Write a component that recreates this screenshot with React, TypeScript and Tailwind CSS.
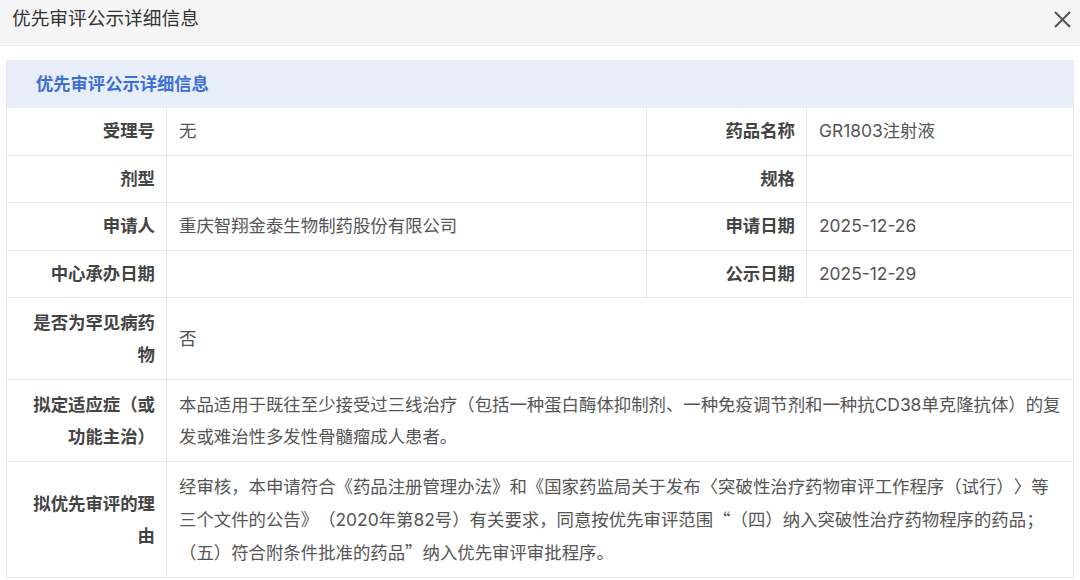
type Pair = { label: string; value: string };

const pairRows: [Pair, Pair][] = [
    [
        { label: '受理号', value: '无' },
        { label: '药品名称', value: 'GR1803注射液' },
    ],
    [
        { label: '剂型', value: '' },
        { label: '规格', value: '' },
    ],
    [
        { label: '申请人', value: '重庆智翔金泰生物制药股份有限公司' },
        { label: '申请日期', value: '2025-12-26' },
    ],
    [
        { label: '中心承办日期', value: '' },
        { label: '公示日期', value: '2025-12-29' },
    ],
];

const wideRows: { label: string; lines: string[] }[] = [
    { label: '是否为罕见病药物', lines: ['否'] },
    {
        label: '拟定适应症（或功能主治）',
        lines: [
            '本品适用于既往至少接受过三线治疗（包括一种蛋白酶体抑制剂、一种免疫调节剂和一种抗CD38单克隆抗体）的复',
            '发或难治性多发性骨髓瘤成人患者。',
        ],
    },
    {
        label: '拟优先审评的理由',
        lines: [
            '经审核，本申请符合《药品注册管理办法》和《国家药监局关于发布〈突破性治疗药物审评工作程序（试行）〉等',
            '三个文件的公告》（2020年第82号）有关要求，同意按优先审评范围“（四）纳入突破性治疗药物程序的药品；',
            '（五）符合附条件批准的药品”纳入优先审评审批程序。',
        ],
    },
];

const labelCell =
    'flex items-center justify-end border-r border-b border-[#e6e8eb] pl-[19px] pr-[11px] text-right font-bold text-[#444]';
const valueCell = 'flex items-center border-r border-b border-[#e6e8eb] px-[12px] text-[#555]';

// curly quotes are set full width, as in the source page
function Line({ text }: { text: string }) {
    const parts = text.split(/([“”])/);
    return (
        <div className="whitespace-nowrap">
            {parts.map((part, i) =>
                part === '“' || part === '”' ? (
                    <span key={i} className="font-['Noto_Sans_CJK_SC'] [font-feature-settings:'fwid']">
                        {part}
                    </span>
                ) : (
                    part
                ),
            )}
        </div>
    );
}

export default function App() {
    return (
        <div
            className="h-[580px] w-[1080px] overflow-hidden bg-white [text-spacing-trim:space-all]"
            style={{ fontFamily: 'Inter, "Noto Sans CJK SC", sans-serif' }}
        >
            <div className="flex h-[46px] items-start justify-between border-b border-[#ebebeb] bg-[#f5f5f5] pl-[12px] pr-[9px] pt-[5px]">
                <span className="text-[18.7px] leading-[28px] text-[#333]">优先审评公示详细信息</span>
                <svg width="17" height="17" viewBox="0 0 17 17" className="mt-[6px] text-[#555]">
                    <path d="M1 1 L16 16 M16 1 L1 16" stroke="currentColor" strokeWidth="2" fill="none" />
                </svg>
            </div>

            <div className="mx-[6px] mt-[14px] w-[1068px] border-l border-[#e6e8eb]">
                <div className="flex h-[48px] items-center bg-[#e8eef9] pl-[29px] text-[17.3px] font-bold text-[#3d6fd6]">
                    优先审评公示详细信息
                </div>

                <div className="grid grid-cols-[160px_480px_160px_1fr] text-[17.4px]">
                    {pairRows.map(([left, right]) => (
                        <div key={left.label} className="contents">
                            <div className={`${labelCell} py-[8px] leading-[30.5px]`}>{left.label}</div>
                            <div className={`${valueCell} py-[8px] leading-[30.5px]`}>{left.value}</div>
                            <div className={`${labelCell} py-[8px] leading-[30.5px]`}>{right.label}</div>
                            <div className={`${valueCell} py-[8px] leading-[30.5px]`}>{right.value}</div>
                        </div>
                    ))}
                    {wideRows.map((row) => (
                        <div key={row.label} className="contents">
                            <div className={`${labelCell} py-[8.5px] leading-[32px]`}>{row.label}</div>
                            <div className={`${valueCell} col-span-3 py-[8.5px] leading-[32px]`}>
                                <div>
                                    {row.lines.map((line) => (
                                        <Line key={line} text={line} />
                                    ))}
                                </div>
                            </div>
                        </div>
                    ))}
                </div>
            </div>
        </div>
    );
}
